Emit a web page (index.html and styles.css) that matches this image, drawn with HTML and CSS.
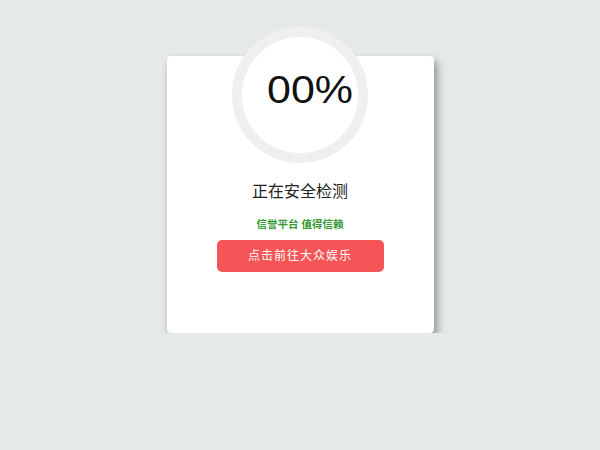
FILE: index.html
```html
<!DOCTYPE html>
<html lang="zh-CN">
<head>
  <meta charset="UTF-8" />
  <meta name="viewport" content="width=device-width, initial-scale=1.0" />
  <title>正在安全检测</title>
  <link rel="stylesheet" href="styles.css">
</head>
<body>
  <div class="card">
    <div class="ring">
      <span class="percent">00%</span>
    </div>
    <h3 class="title">正在安全检测</h3>
    <p class="slogan">信誉平台 值得信赖</p>
    <a class="go-btn" href="#">点击前往大众娱乐</a>
  </div>
</body>
</html>
```

FILE: styles.css
```css
body {
  font-family: "Liberation Sans", "Noto Sans CJK SC", sans-serif;
  background: #e6e9ea;
  margin: 0;
  padding: 0;
}
.card {
  width: 267px;
  height: 277px;
  margin: 56px auto 0;
  background: #fff;
  border-radius: 4px;
  box-shadow: 3px 5px 8px rgba(0,0,0,0.4);
  display: flex;
  flex-direction: column;
  align-items: center;
}
.ring {
  width: 116px;
  height: 116px;
  margin-top: -29px;
  border: 10px solid #f0efee;
  border-radius: 50%;
  background: #fff;
  display: flex;
  align-items: center;
  justify-content: center;
}
.percent {
  font-size: 38px;
  color: #111;
  margin: -9px 0 0 20px;
  transform: scaleX(1.13);
}
.title {
  margin: 18px 0 0;
  font-size: 16px;
  line-height: 22px;
  font-weight: normal;
  color: #222;
}
.slogan {
  margin: 13px 0 0;
  font-size: 10.5px;
  line-height: 16px;
  font-weight: bold;
  color: #339933;
}
.go-btn {
  margin-top: 8px;
  width: 167px;
  height: 32px;
  line-height: 32px;
  border-radius: 5px;
  background: #f55556;
  color: #fff;
  font-size: 12px;
  letter-spacing: 1px;
  text-align: center;
  text-decoration: none;
}
```
